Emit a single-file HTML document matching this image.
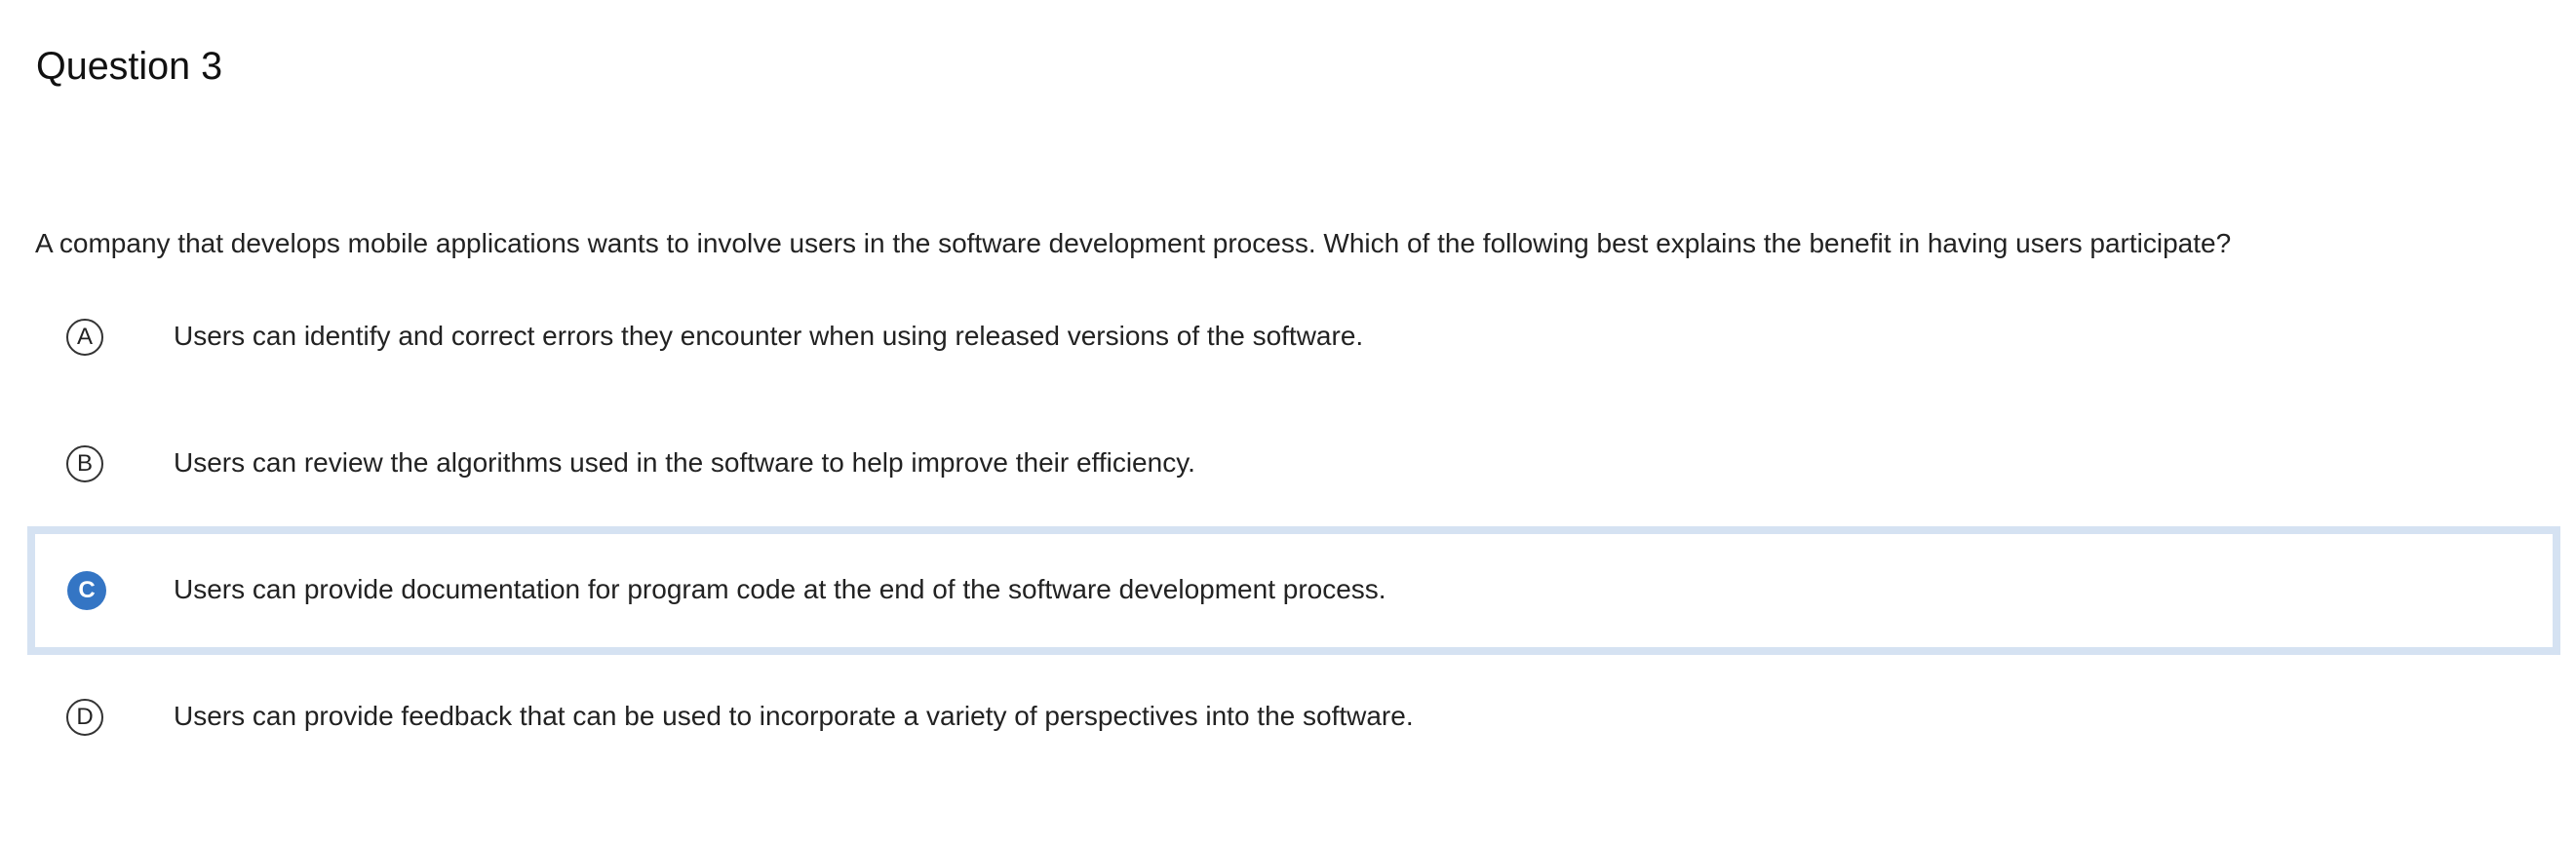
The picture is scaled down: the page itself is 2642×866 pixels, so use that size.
<!DOCTYPE html>
<html><head><style>
body{margin:0;width:2642px;height:866px;background:#fff;font-family:"Liberation Sans",Arial,sans-serif;color:#222;position:relative;overflow:hidden}
.h{position:absolute;left:37px;top:46px;font-size:39.5px;color:#111}
.q{position:absolute;left:36px;top:234px;font-size:28px;white-space:nowrap}
.c{position:absolute;left:68px;width:38px;height:38px;border:2px solid #333;border-radius:50%;box-sizing:border-box;text-align:center;line-height:34px;font-size:24px;color:#222}
.t{position:absolute;left:178px;font-size:28px;white-space:nowrap}
.box{position:absolute;left:28px;top:540px;width:2598px;height:132px;border:8px solid #d5e2f2;box-sizing:border-box}
</style></head><body>
<div class="h">Question 3</div>
<div class="q">A company that develops mobile applications wants to involve users in the software development process. Which of the following best explains the benefit in having users participate?</div>
<div class="box"></div>
<div class="c" style="top:327px">A</div><div class="t" style="top:329px">Users can identify and correct errors they encounter when using released versions of the software.</div>
<div class="c" style="top:457px">B</div><div class="t" style="top:459px">Users can review the algorithms used in the software to help improve their efficiency.</div>
<div class="c" style="top:586px;width:40px;height:40px;left:69px;background:#3475c4;border:none;color:#fff;line-height:40px;font-weight:bold">C</div><div class="t" style="top:589px">Users can provide documentation for program code at the end of the software development process.</div>
<div class="c" style="top:717px">D</div><div class="t" style="top:719px">Users can provide feedback that can be used to incorporate a variety of perspectives into the software.</div>
</body></html>
